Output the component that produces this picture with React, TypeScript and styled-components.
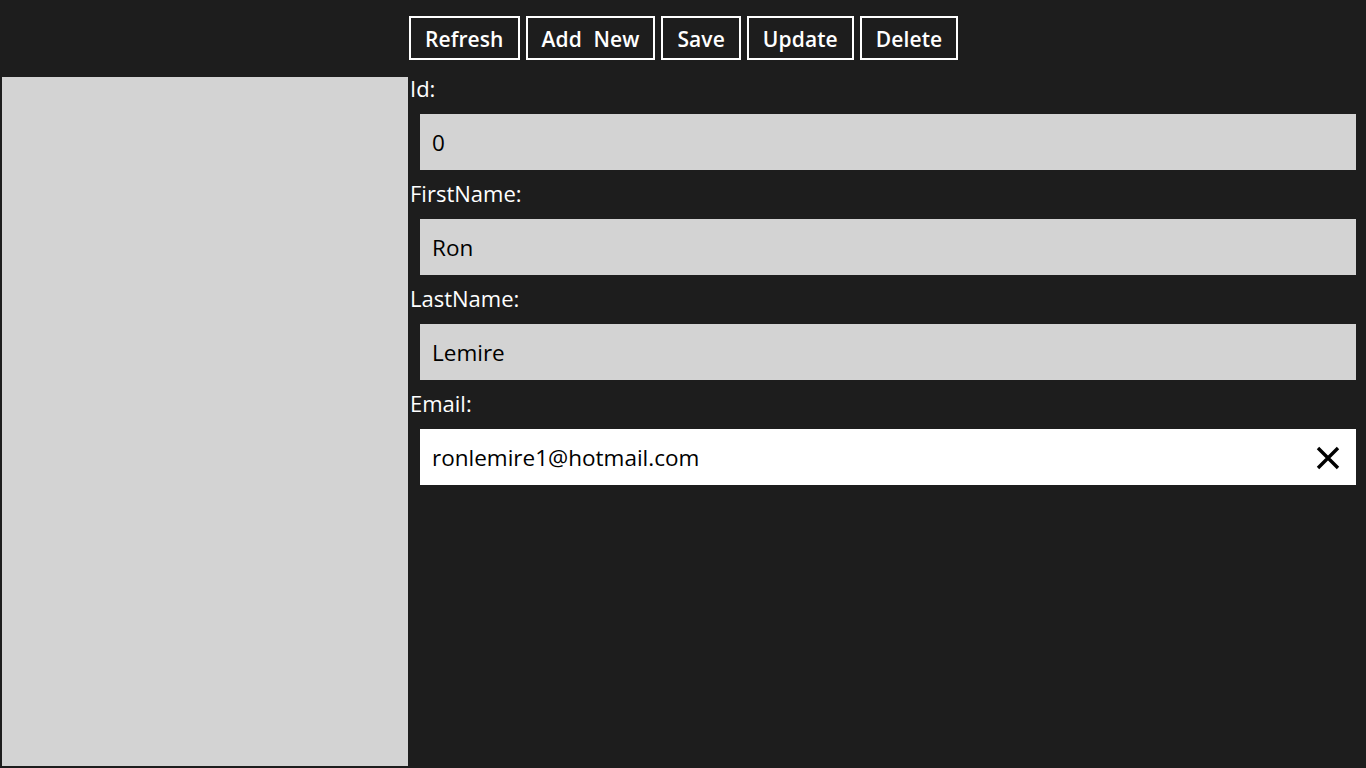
import React from "react";
import styled, { createGlobalStyle } from "styled-components";

const Global = createGlobalStyle`
  html, body { margin: 0; padding: 0; background: #1d1d1d; }
  body { font-family: "Open Sans", "Noto Sans", sans-serif; }
`;

const Page = styled.div`
  width: 1366px;
  height: 768px;
  display: grid;
  grid-template-columns: 408px 1fr;
  grid-template-rows: 77px 1fr;
  background: #1d1d1d;
  overflow: hidden;
`;

const Toolbar = styled.div`
  grid-column: 2;
  grid-row: 1;
  display: flex;
  gap: 6px;
  padding: 16px 0 0 1px;
  align-items: flex-start;
`;

const Button = styled.button`
  box-sizing: border-box;
  height: 44px;
  padding: 2px 14px 0 14px;
  background: transparent;
  border: 2px solid #ffffff;
  color: #ffffff;
  font-family: "Open Sans", "Noto Sans", sans-serif;
  font-weight: 600;
  font-size: 21px;
  line-height: 38px;
  word-spacing: 6px;
  letter-spacing: 0.1px;
  cursor: pointer;
`;

const SidePanel = styled.div`
  grid-column: 1;
  grid-row: 2;
  margin: 0 0 2px 2px;
  background: #d3d3d3;
`;

const Form = styled.div`
  grid-column: 2;
  grid-row: 2;
  display: flex;
  flex-direction: column;
  padding-left: 2px;
`;

const Label = styled.div`
  color: #ffffff;
  font-size: 22px;
  line-height: 26px;
  height: 26px;
  margin-top: -2px;
  margin-bottom: 13px;
`;

const Field = styled.div<{ $focused?: boolean }>`
  box-sizing: border-box;
  height: 56px;
  margin: 0 10px 12px 10px;
  padding: 1px 12px 0 12px;
  display: flex;
  align-items: center;
  background: ${(p) => (p.$focused ? "#ffffff" : "#d3d3d3")};
  color: #000000;
  font-size: 22.5px;
`;

const FieldText = styled.span`
  flex: 1;
`;

const ClearIcon = styled.svg`
  width: 24px;
  height: 24px;
  margin-right: 4px;
`;

const rows: { label: string; value: string; focused?: boolean }[] = [
  { label: "Id:", value: "0" },
  { label: "FirstName:", value: "Ron" },
  { label: "LastName:", value: "Lemire" },
  { label: "Email:", value: "ronlemire1@hotmail.com", focused: true },
];

export default function App() {
  return (
    <>
      <Global />
      <Page>
        <Toolbar>
          {["Refresh", "Add New", "Save", "Update", "Delete"].map((b) => (
            <Button key={b}>{b}</Button>
          ))}
        </Toolbar>
        <SidePanel />
        <Form>
          {rows.map((r) => (
            <React.Fragment key={r.label}>
              <Label>{r.label}</Label>
              <Field $focused={r.focused}>
                <FieldText>{r.value}</FieldText>
                {r.focused && (
                  <ClearIcon viewBox="0 0 24 24">
                    <path d="M2 2 L22 22 M22 2 L2 22" stroke="#000" strokeWidth="3.4" strokeLinecap="butt" fill="none" />
                  </ClearIcon>
                )}
              </Field>
            </React.Fragment>
          ))}
        </Form>
      </Page>
    </>
  );
}
